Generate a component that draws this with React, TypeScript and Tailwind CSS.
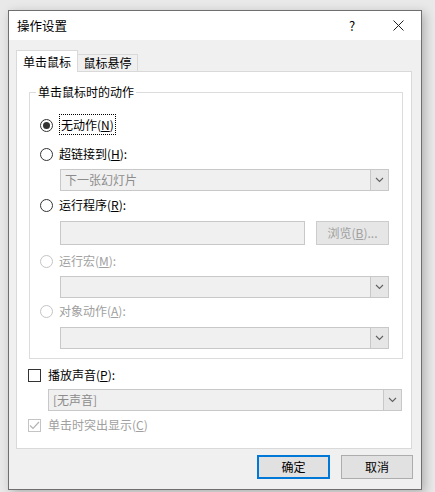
import React from 'react';

const font = { fontFamily: '"Noto Sans CJK SC", "Noto Sans", sans-serif' };

const Chevron = ({ color = '#606060' }: { color?: string }) => (
  <svg width="9" height="6" viewBox="0 0 9 6" fill="none">
    <path d="M1 1l3.5 3.5L8 1" stroke={color} strokeWidth="1.1" />
  </svg>
);

const Radio = ({
  checked = false,
  disabled = false,
  children,
}: {
  checked?: boolean;
  disabled?: boolean;
  children: React.ReactNode;
}) => (
  <div className="flex items-center h-[16px] gap-[6px]">
    <div
      className={`w-[13px] h-[13px] rounded-full border flex items-center justify-center bg-white ${
        disabled ? 'border-[#c4c4c4]' : 'border-[#333333]'
      }`}
    >
      {checked && <div className="w-[7px] h-[7px] rounded-full bg-[#333333]" />}
    </div>
    <div className={disabled ? 'text-[#a0a0a0]' : 'text-black'}>{children}</div>
  </div>
);

const Dropdown = ({ value = '', className = '' }: { value?: string; className?: string }) => (
  <div className={`flex h-[22px] border border-[#c8c8c8] bg-[#f0f0f0] ${className}`}>
    <div className="flex-1 pl-[4px] leading-[20px] text-[#8c8c8c]">{value}</div>
    <div className="w-[18px] border-l border-[#c8c8c8] bg-[#e6e6e6] flex items-center justify-center">
      <Chevron />
    </div>
  </div>
);

export default function App() {
  return (
    <div
      className="w-[435px] h-[492px] bg-[#e9e9e9] pt-[10px] pl-[8px] overflow-hidden text-[12px] leading-[16px]"
      style={font}
    >
      <div className="w-[414px] h-[480px] border border-[#6f6f6f] bg-[#f0f0f0] flex flex-col shadow-[3px_3px_10px_rgba(0,0,0,0.25)]">
        {/* title bar */}
        <div className="h-[29px] bg-white flex items-center pl-[8px] shrink-0">
          <span className="text-black text-[12.5px]">操作设置</span>
          <div className="ml-auto w-[30px] text-center text-[13px] text-black">?</div>
          <div className="ml-[8px] w-[46px] flex items-center justify-center">
            <svg width="11" height="11" viewBox="0 0 11 11">
              <path d="M0.5 0.5l10 10M10.5 0.5l-10 10" stroke="#222" strokeWidth="1" />
            </svg>
          </div>
        </div>

        <div className="flex-1 pl-[7px] pt-[10px]">
          {/* tabs */}
          <div className="flex items-end h-[21px]">
            <div className="relative z-10 w-[62px] h-[22px] -mb-px bg-white border-l border-t border-r border-[#d9d9d9] flex items-center justify-center text-black">
              单击鼠标
            </div>
            <div className="w-[60px] h-[17px] bg-[#f0f0f0] border-t border-r border-[#d9d9d9] flex items-center justify-center text-black">
              鼠标悬停
            </div>
          </div>

          {/* panel */}
          <div className="w-[396px] h-[378px] border border-[#d9d9d9] bg-white">
            <div className="relative mt-[20px] ml-[12px] w-[374px] h-[267px] border border-[#dcdcdc] pl-[10px] pt-[24px]">
              <div className="absolute -top-[9px] left-[6px] px-[2px] bg-white text-black">单击鼠标时的动作</div>

              <Radio checked>
                <span className="border border-dotted border-black px-[1px] py-[1px]">
                  无动作(<span className="underline">N</span>)
                </span>
              </Radio>
              <div className="mt-[13px]">
                <Radio>
                  超链接到(<span className="underline">H</span>):
                </Radio>
              </div>
              <Dropdown value="下一张幻灯片" className="mt-[7px] ml-[20px] w-[329px]" />
              <div className="mt-[6px]">
                <Radio>
                  运行程序(<span className="underline">R</span>):
                </Radio>
              </div>
              <div className="mt-[8px] ml-[20px] flex gap-[11px] h-[24px]">
                <div className="w-[245px] border border-[#c8c8c8] bg-[#f0f0f0]" />
                <div className="w-[73px] border border-[#cccccc] bg-[#e6e6e6] flex items-center justify-center text-[#a0a0a0]">
                  浏览(<span className="underline">B</span>)...
                </div>
              </div>
              <div className="mt-[8px]">
                <Radio disabled>
                  运行宏(<span className="underline">M</span>):
                </Radio>
              </div>
              <Dropdown className="mt-[7px] ml-[20px] w-[329px]" />
              <div className="mt-[5px]">
                <Radio disabled>
                  对象动作(<span className="underline">A</span>):
                </Radio>
              </div>
              <Dropdown className="mt-[8px] ml-[20px] w-[329px]" />
            </div>

            {/* play sound */}
            <div className="mt-[8px] ml-[11px] flex items-center h-[16px] gap-[7px]">
              <div className="w-[13px] h-[13px] border border-[#333333] bg-white" />
              <div className="text-black">
                播放声音(<span className="underline">P</span>):
              </div>
            </div>
            <Dropdown value="[无声音]" className="mt-[6px] ml-[31px] w-[354px]" />
            <div className="mt-[6px] ml-[11px] flex items-center h-[16px] gap-[7px]">
              <div className="w-[13px] h-[13px] border border-[#c4c4c4] bg-white flex items-center justify-center">
                <svg width="11" height="9" viewBox="0 0 11 9" fill="none">
                  <path d="M1 4.5l3 3L10 1" stroke="#b4b4b4" strokeWidth="1.2" />
                </svg>
              </div>
              <div className="text-[#a0a0a0]">
                单击时突出显示(<span className="underline">C</span>)
              </div>
            </div>
          </div>

          {/* buttons */}
          <div className="mt-[6px] flex justify-end gap-[11px] pr-[8px]">
            <div className="w-[73px] h-[24px] border-2 border-[#0078d7] bg-[#e1e1e1] flex items-center justify-center text-black">
              确定
            </div>
            <div className="w-[72px] h-[24px] border border-[#adadad] bg-[#e1e1e1] flex items-center justify-center text-black">
              取消
            </div>
          </div>
        </div>
      </div>
    </div>
  );
}
